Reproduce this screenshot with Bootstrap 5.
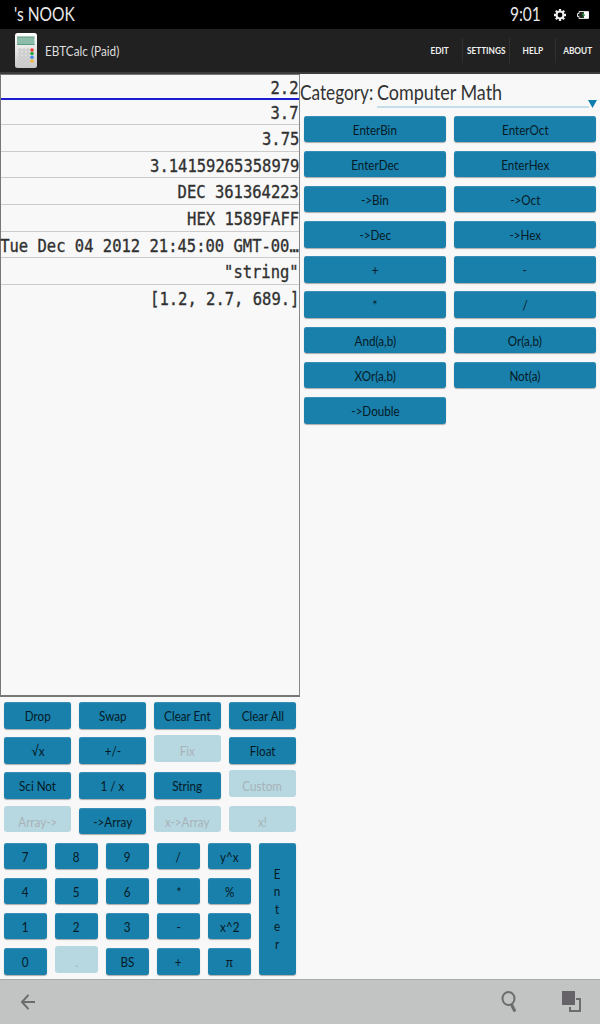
<!DOCTYPE html>
<html lang="en">
<head>
<meta charset="utf-8">
<title>EBTCalc (Paid)</title>
<link href="https://cdn.jsdelivr.net/npm/bootstrap@5.3.0/dist/css/bootstrap.min.css" rel="stylesheet">
<style>
body{width:600px;height:1024px;overflow:hidden;background:#f8f8f8;color:#333;font-family:Lato,"Open Sans",sans-serif}
.status{height:29px;background:#000;color:#e8e8e8;font-size:18.5px;line-height:29px}
.appbar{height:45px;background:#212121;color:#ddd;border-bottom:2px solid #3c3c3c}
.tx{display:inline-block;white-space:pre;transform:scaleX(.84)}
.tl{transform-origin:left}
.tr{transform-origin:right}
.menu-item{height:25px;font-size:9.5px;font-weight:700;border-left:1px solid #303030;color:#f0f0f0}
.menu-item .tx{transform:translate(0,1px) scaleX(.87)}
.pane{width:300px}
.stack{height:623px;border:1px solid #777;border-width:1.5px 1px 2px;border-right-color:#888;font-family:"DejaVu Sans Mono",monospace;font-size:18px;color:#303030;-webkit-text-stroke:.35px #303030}
.entry{height:26.6px;line-height:28px;border-bottom:1px solid #ccc}
.entry .tx{transform:scaleX(.861)}
.entry.current{height:25px;line-height:25px;border-bottom:2px solid #1b1bd0}
.entry.current + .entry{height:25.3px;line-height:26px}
.entry:last-child{border:0}
.category{height:41.5px;font-size:21px;line-height:35px}
.category .tx.tl{transform:scaleX(.82)}
.picker{width:212px;height:34px;border-bottom:2px solid #c4dfe9;position:relative}
.category .picker .tx.tl{transform:scaleX(.855)}
.picker svg{position:absolute;left:211px;top:26px}
.grid{display:grid;grid-auto-rows:26.5px;row-gap:8.7px;column-gap:8px;padding:0 4px}
.g2{grid-template-columns:1fr 1fr}
.g4{grid-template-columns:repeat(4,1fr);padding-top:5px}
.gpad{grid-template-columns:repeat(5,43.2px) 1fr;column-gap:7.8px;padding-top:8.5px}
.key{--bs-btn-padding-x:0;--bs-btn-padding-y:0;--bs-btn-font-size:14.2px;--bs-btn-line-height:27px;--bs-btn-color:#041a24;--bs-btn-bg:#197fab;--bs-btn-border-width:0;--bs-btn-border-radius:3px;--bs-btn-disabled-color:#a8b2b8;--bs-btn-disabled-bg:#b7d8e0;--bs-btn-disabled-opacity:1;box-shadow:inset 0 1px 1px #3b92b8,0 1px 1px #aaa;min-width:0}
.key .tx{transform:scaleX(.82)}
.key:disabled{margin-top:-2px;margin-bottom:2px;box-shadow:none}
.key:disabled .tx{position:relative;top:2px}
.enter{grid-row:1/5;grid-column:6;line-height:17.6px}
.navbar-soft{height:45px;background:#c2c4c3;border-top:1px solid #aaa}
</style>
<script src="https://cdn.jsdelivr.net/npm/bootstrap@5.3.0/dist/js/bootstrap.bundle.min.js"></script>
</head>
<body class="d-flex flex-column">
<div class="status d-flex align-items-center flex-shrink-0">
  <span class="tx tl" style="margin-left:14px">'s NOOK</span>
  <span class="tx tr ms-auto" style="margin-right:12px">9:01</span>
  <svg width="14" height="14" viewBox="-7 -7 14 14" style="margin-right:10px"><g stroke="#eee" stroke-width="2.3"><path d="M0-6V6M-6 0H6M-4.2-4.2 4.2 4.2M-4.2 4.2 4.2-4.2"/></g><circle r="3.4" fill="#000" stroke="#eee" stroke-width="2"/></svg>
  <svg width="12" height="8" viewBox="0 0 12 8" style="margin-right:11px"><path d="M2 .5h9.5v7H2V5.5H.5v-3H2z" fill="#222" stroke="#ddd"/><path d="M7 1h4.5v6H7z" fill="#fff"/><path d="M7 1 4.5 4H6L5.5 7 8.5 3.5H7z" fill="#2b8c3b"/></svg>
</div>
<header class="appbar d-flex align-items-center flex-shrink-0">
  <svg width="24" height="37" viewBox="0 0 24 37" style="margin-left:14px">
    <defs><linearGradient id="shell" x2="0" y2="1"><stop stop-color="#fff"/><stop offset="1" stop-color="#c8c8c8"/></linearGradient></defs>
    <rect x="1" y="1" width="22" height="35" rx="2.5" fill="url(#shell)"/>
    <rect x="3" y="5" width="17.5" height="8" fill="#8dbdaa"/><path d="M3 5h17.5M3 12.5h17.5" stroke="#5b9b80"/>
    <g fill="#d8d8d8" stroke="#b8b8b8" stroke-width=".5"><circle cx="6" cy="18" r="1.4"/><circle cx="10" cy="18" r="1.4"/><circle cx="14" cy="18" r="1.4"/><circle cx="6" cy="21.5" r="1.4"/><circle cx="10" cy="21.5" r="1.4"/><circle cx="14" cy="21.5" r="1.4"/><circle cx="6" cy="25.3" r="1.4"/><circle cx="10" cy="25.3" r="1.4"/><circle cx="14" cy="25.3" r="1.4"/><circle cx="6" cy="29" r="1.4"/><circle cx="10" cy="29" r="1.4"/><circle cx="14" cy="29" r="1.4"/></g>
    <circle cx="18" cy="18" r="1.8" fill="#e33"/><circle cx="18" cy="21.5" r="1.8" fill="#2a3"/><circle cx="18" cy="25.3" r="1.8" fill="#48e"/><circle cx="18" cy="29" r="1.8" fill="#eb3"/>
  </svg>
  <span class="tx tl" style="font-size:14px;margin-left:7px">EBTCalc (Paid)</span>
  <nav class="d-flex ms-auto">
    <div class="menu-item border-0 d-flex align-items-center justify-content-center" style="width:44px"><span class="tx">EDIT</span></div>
    <div class="menu-item d-flex align-items-center justify-content-center" style="width:47px"><span class="tx">SETTINGS</span></div>
    <div class="menu-item d-flex align-items-center justify-content-center" style="width:46px"><span class="tx">HELP</span></div>
    <div class="menu-item d-flex align-items-center justify-content-center" style="width:45px"><span class="tx">ABOUT</span></div>
  </nav>
</header>
<main class="d-flex flex-grow-1" style="min-height:0">
  <section class="pane">
    <div class="stack text-end">
      <div class="entry current"><span class="tx tr">2.2</span></div>
      <div class="entry"><span class="tx tr">3.7</span></div>
      <div class="entry"><span class="tx tr">3.75</span></div>
      <div class="entry"><span class="tx tr">3.14159265358979</span></div>
      <div class="entry"><span class="tx tr">DEC 361364223</span></div>
      <div class="entry"><span class="tx tr">HEX 1589FAFF</span></div>
      <div class="entry d-flex justify-content-end"><span class="tx tr">Tue Dec 04 2012 21:45:00 GMT-00…</span></div>
      <div class="entry"><span class="tx tr">"string"</span></div>
      <div class="entry"><span class="tx tr">[1.2, 2.7, 689.]</span></div>
    </div>
    <div class="grid g4">
      <button class="btn key"><span class="tx">Drop</span></button><button class="btn key"><span class="tx">Swap</span></button><button class="btn key"><span class="tx">Clear Ent</span></button><button class="btn key"><span class="tx">Clear All</span></button>
      <button class="btn key"><span class="tx">√x</span></button><button class="btn key"><span class="tx">+/-</span></button><button class="btn key" disabled><span class="tx">Fix</span></button><button class="btn key"><span class="tx">Float</span></button>
      <button class="btn key"><span class="tx">Sci Not</span></button><button class="btn key"><span class="tx">1 / x</span></button><button class="btn key"><span class="tx">String</span></button><button class="btn key" disabled><span class="tx">Custom</span></button>
      <button class="btn key" disabled><span class="tx">Array-&gt;</span></button><button class="btn key"><span class="tx">-&gt;Array</span></button><button class="btn key" disabled><span class="tx">x-&gt;Array</span></button><button class="btn key" disabled><span class="tx">x!</span></button>
    </div>
    <div class="grid gpad">
      <button class="btn key"><span class="tx">7</span></button><button class="btn key"><span class="tx">8</span></button><button class="btn key"><span class="tx">9</span></button><button class="btn key"><span class="tx">/</span></button><button class="btn key"><span class="tx">y^x</span></button>
      <button class="btn key enter"><span class="tx">E
n
t
e
r</span></button>
      <button class="btn key"><span class="tx">4</span></button><button class="btn key"><span class="tx">5</span></button><button class="btn key"><span class="tx">6</span></button><button class="btn key"><span class="tx">*</span></button><button class="btn key"><span class="tx">%</span></button>
      <button class="btn key"><span class="tx">1</span></button><button class="btn key"><span class="tx">2</span></button><button class="btn key"><span class="tx">3</span></button><button class="btn key"><span class="tx">-</span></button><button class="btn key"><span class="tx">x^2</span></button>
      <button class="btn key"><span class="tx">0</span></button><button class="btn key" disabled><span class="tx">.</span></button><button class="btn key"><span class="tx">BS</span></button><button class="btn key"><span class="tx">+</span></button><button class="btn key"><span class="tx">π</span></button>
    </div>
  </section>
  <section class="pane">
    <div class="category d-flex">
      <div style="width:77px"><span class="tx tl">Category:</span></div>
      <div class="picker"><span class="tx tl">Computer Math</span><svg width="9" height="8"><path d="M0 0h9L4.5 8z" fill="#0e7fae"/></svg></div>
    </div>
    <div class="grid g2">
      <button class="btn key"><span class="tx">EnterBin</span></button><button class="btn key"><span class="tx">EnterOct</span></button>
      <button class="btn key"><span class="tx">EnterDec</span></button><button class="btn key"><span class="tx">EnterHex</span></button>
      <button class="btn key"><span class="tx">-&gt;Bin</span></button><button class="btn key"><span class="tx">-&gt;Oct</span></button>
      <button class="btn key"><span class="tx">-&gt;Dec</span></button><button class="btn key"><span class="tx">-&gt;Hex</span></button>
      <button class="btn key"><span class="tx">+</span></button><button class="btn key"><span class="tx">-</span></button>
      <button class="btn key"><span class="tx">*</span></button><button class="btn key"><span class="tx">/</span></button>
      <button class="btn key"><span class="tx">And(a,b)</span></button><button class="btn key"><span class="tx">Or(a,b)</span></button>
      <button class="btn key"><span class="tx">XOr(a,b)</span></button><button class="btn key"><span class="tx">Not(a)</span></button>
      <button class="btn key"><span class="tx">-&gt;Double</span></button>
    </div>
  </section>
</main>
<footer class="navbar-soft d-flex align-items-center flex-shrink-0">
  <svg width="16" height="17" viewBox="0 0 16 17" style="margin-left:20px" fill="none" stroke="#6c6c6e" stroke-width="2"><path d="M15 8H2M8.5 .8 2 8 8.5 15.2"/></svg>
  <svg class="ms-auto" width="16" height="22" viewBox="0 0 16 22" style="margin-right:45px" fill="none" stroke="#6c6c6e"><ellipse cx="7.5" cy="7.5" rx="6" ry="6.5" stroke-width="2"/><path d="M10.5 13.5l3.5 7" stroke-width="3"/></svg>
  <svg width="20" height="22" viewBox="0 0 20 22" style="margin-right:18px"><path d="M0 0h13v14H0z" fill="#656368"/><path d="M14 8h4v12H8V16" fill="none" stroke="#6c6c6e" stroke-width="2"/></svg>
</footer>
</body>
</html>
